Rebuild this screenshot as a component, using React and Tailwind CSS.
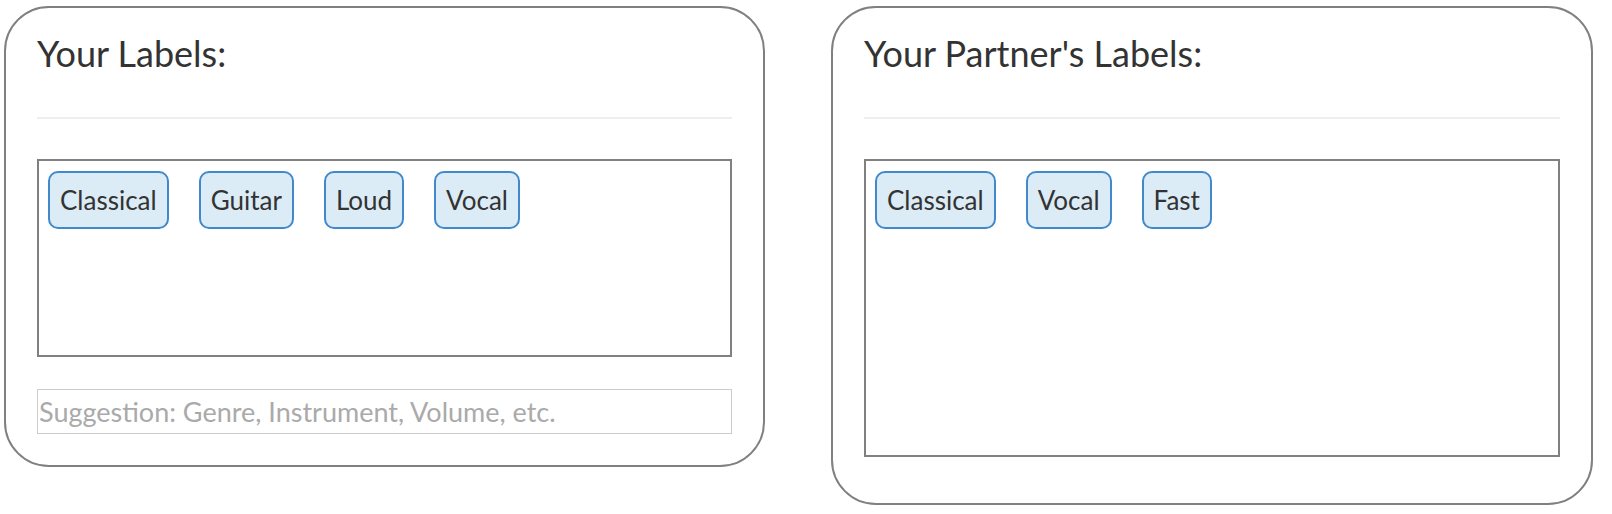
import React from 'react';

const Tag = ({ children }) => (
    <div className="h-[58px] px-[10px] flex items-center border-2 border-[#4289cb] bg-[#dbecf6] rounded-[10px] text-[26px] text-[#333]">
        {children}
    </div>
);

const Panel = ({ title, tags, boxHeight, withInput, className }) => (
    <div className={`border-2 border-[#808080] rounded-[45px] bg-white px-[31px] pt-[24px] ${className}`}>
        <h2 className="text-[36px] leading-[43px] text-[#333] font-normal">{title}</h2>
        <div className="mt-[42px] h-[2px] bg-[#eeeeee]" />
        <div className={`mt-[40px] border-2 border-[#808080] flex items-start gap-[30px] pt-[10px] pl-[9px] ${boxHeight}`}>
            {tags.map((t) => (
                <Tag key={t}>{t}</Tag>
            ))}
        </div>
        {withInput && (
            <input
                className="mt-[32px] block w-full h-[45px] border border-[#cccccc] px-[1px] text-[27px] text-[#333] placeholder:text-[#aaaaaa] outline-none"
                placeholder="Suggestion: Genre, Instrument, Volume, etc."
            />
        )}
    </div>
);

export default function App() {
    return (
        <div className="min-h-screen bg-white flex items-start gap-[66px] pl-[4px] pt-[6px] font-['Lato',sans-serif]">
            <Panel
                title="Your Labels:"
                tags={['Classical', 'Guitar', 'Loud', 'Vocal']}
                boxHeight="h-[198px]"
                withInput
                className="w-[761px] pb-[31px]"
            />
            <Panel
                title="Your Partner's Labels:"
                tags={['Classical', 'Vocal', 'Fast']}
                boxHeight="h-[298px]"
                className="w-[762px] pb-[46px]"
            />
        </div>
    );
}
